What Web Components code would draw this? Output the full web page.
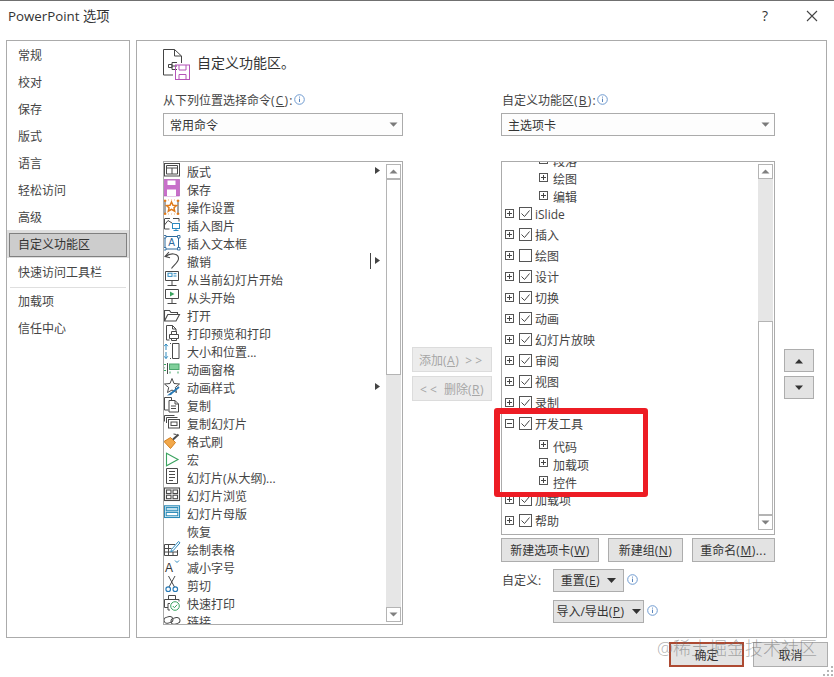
<!DOCTYPE html>
<html lang="zh-CN"><head><meta charset="utf-8"><title>PowerPoint 选项</title>
<style>
html,body{margin:0;padding:0;background:#fff}
body{width:834px;height:677px;overflow:hidden;font:12px/18px "Open Sans","Noto Sans CJK SC",sans-serif;color:#444}
u{text-underline-offset:1px}
.lat{letter-spacing:.5px}
.lat2{letter-spacing:1.2px}
.gt{letter-spacing:3px;margin:0 0 0 3px}
.lt{letter-spacing:3px;margin:0 1px 0 0}
</style></head><body>
<ppt-dialog>
  <ppt-titlebar slot="title">PowerPoint 选项</ppt-titlebar>
  <ppt-sidebar slot="side">
    <nav-item>常规</nav-item><nav-item>校对</nav-item><nav-item>保存</nav-item><nav-item>版式</nav-item>
    <nav-item>语言</nav-item><nav-item>轻松访问</nav-item><nav-item>高级</nav-item>
    <nav-item selected>自定义功能区</nav-item><nav-item>快速访问工具栏</nav-item>
    <nav-rule></nav-rule>
    <nav-item>加载项</nav-item><nav-item>信任中心</nav-item>
  </ppt-sidebar>
  <ppt-panel slot="main">
    <panel-head slot="head">自定义功能区。</panel-head>
    <field-col slot="c1">
      <field-label>从下列位置选择命令<span class="lat2">(<u>C</u>):</span></field-label>
      <ppt-combo>常用命令</ppt-combo>
      <cmd-list>
        <cmd-item icon="layout" arrow>版式</cmd-item>
        <cmd-item icon="save">保存</cmd-item>
        <cmd-item icon="action">操作设置</cmd-item>
        <cmd-item icon="picture">插入图片</cmd-item>
        <cmd-item icon="textbox">插入文本框</cmd-item>
        <cmd-item icon="undo" split>撤销</cmd-item>
        <cmd-item icon="current">从当前幻灯片开始</cmd-item>
        <cmd-item icon="start">从头开始</cmd-item>
        <cmd-item icon="open">打开</cmd-item>
        <cmd-item icon="print">打印预览和打印</cmd-item>
        <cmd-item icon="size">大小和位置...</cmd-item>
        <cmd-item icon="pane">动画窗格</cmd-item>
        <cmd-item icon="anim" arrow>动画样式</cmd-item>
        <cmd-item icon="copy">复制</cmd-item>
        <cmd-item icon="dup">复制幻灯片</cmd-item>
        <cmd-item icon="brush">格式刷</cmd-item>
        <cmd-item icon="macro">宏</cmd-item>
        <cmd-item icon="outline">幻灯片(从大纲)...</cmd-item>
        <cmd-item icon="sorter">幻灯片浏览</cmd-item>
        <cmd-item icon="master">幻灯片母版</cmd-item>
        <cmd-item>恢复</cmd-item>
        <cmd-item icon="table">绘制表格</cmd-item>
        <cmd-item icon="shrink">减小字号</cmd-item>
        <cmd-item icon="cut">剪切</cmd-item>
        <cmd-item icon="quick">快速打印</cmd-item>
        <cmd-item icon="link">链接</cmd-item>
      </cmd-list>
    </field-col>
    <move-col slot="c2">
      <ppt-btn disabled lift style="width:80px;height:25px">添加<span class="lat">(<u>A</u>)</span> <span class="gt">&gt;&gt;</span></ppt-btn>
      <ppt-btn disabled lift style="width:80px;height:25px"><span class="lt">&lt;&lt;</span> 删除<span class="lat">(<u>R</u>)</span></ppt-btn>
    </move-col>
    <field-col slot="c3" wide>
      <field-label style="padding-left:1px">自定义功能区<span class="lat2">(<u>B</u>):</span></field-label>
      <ppt-combo>主选项卡</ppt-combo>
      <tree-list>
        <tree-row sub high>段落</tree-row>
        <tree-row sub high>绘图</tree-row>
        <tree-row sub high>编辑</tree-row>
        <tree-row checked>iSlide</tree-row>
        <tree-row checked>插入</tree-row>
        <tree-row>绘图</tree-row>
        <tree-row checked>设计</tree-row>
        <tree-row checked>切换</tree-row>
        <tree-row checked>动画</tree-row>
        <tree-row checked>幻灯片放映</tree-row>
        <tree-row checked>审阅</tree-row>
        <tree-row checked>视图</tree-row>
        <tree-row checked>录制</tree-row>
        <tree-row checked open>开发工具</tree-row>
        <tree-row sub>代码</tree-row>
        <tree-row sub>加载项</tree-row>
        <tree-row sub>控件</tree-row>
        <tree-row checked style="height:20px">加载项</tree-row>
        <tree-row checked>帮助</tree-row>
      </tree-list>
      <action-row style="margin-top:3px">
        <ppt-btn lift style="width:98px;height:24px">新建选项卡<span class="lat">(<u>W</u>)</span></ppt-btn>
        <ppt-btn lift style="width:75px;height:24px">新建组<span class="lat">(<u>N</u>)</span></ppt-btn>
        <ppt-btn lift style="width:83px;height:24px">重命名<span class="lat">(<u>M</u>)...</span></ppt-btn>
      </action-row>
      <custom-row style="margin-top:7px" label="自定义:">
        <ppt-btn menu style="width:71px;height:23px">重置<span class="lat">(<u>E</u>)</span></ppt-btn>
      </custom-row>
      <custom-row style="margin-top:8px">
        <ppt-btn menu style="width:91px;height:23px">导入/导出<span class="lat">(<u>P</u>)</span></ppt-btn>
      </custom-row>
    </field-col>
    <order-col slot="c4">
      <ppt-btn style="width:30px;height:23px"><svg width="10" height="6" viewBox="0 0 10 6" style="display:block"><path d="M1 5.5L5 1l4 4.5z" fill="#333"/></svg></ppt-btn>
      <ppt-btn style="width:30px;height:23px"><svg width="10" height="6" viewBox="0 0 10 6" style="display:block"><path d="M1 .5L5 5l4-4.5z" fill="#333"/></svg></ppt-btn>
    </order-col>
  </ppt-panel>
  <ppt-footer slot="foot">
    <ppt-btn default lift style="width:75px;height:25px">确定</ppt-btn>
    <ppt-btn lift style="width:75px;height:25px">取消</ppt-btn>
  </ppt-footer>
</ppt-dialog>

<script>
const D='#4a4a4a',B='#2e8bc0',G='#3aa35f',O='#e07b1a';
const star=(c,s,extra='')=>`<polygon points="${c}" fill="${s}" ${extra}/>`;
const ICONS={
layout:`<g fill="none" stroke="${D}"><rect x="1.5" y=".5" width="15" height="12.5"/><path d="M3.5 2.5h11v8.5h-11zM3.5 5h11M9 5v6"/></g>`,
save:`<rect x=".5" y="-1.5" width="16" height="16.5" fill="#c86fca" stroke="#a94fb0" stroke-width=".6"/><rect x="4.5" y="-.5" width="8" height="4.5" fill="#fff"/><rect x="4" y="8.5" width="9" height="6.5" fill="#fff"/>`,
action:`<path d="M2 2v12M15 2v12" stroke="${D}" fill="none"/><path d="M1 1h2v1.5H1zM14 1h2v1.5h-2zM1 14h2v1.5H1zM14 14h2v1.5h-2zM5 1h1M8 1h1M11 1h1M5 15h1M8 15h1M11 15h1" fill="${O}" stroke="${O}" stroke-width=".6"/>`+star('8.5,3 10,6.2 13.5,6.5 11,8.8 11.7,12.2 8.5,10.4 5.3,12.2 6,8.8 3.5,6.5 7,6.2','none',`stroke="${O}" stroke-width="1.5"`),
picture:`<g fill="none" stroke="${D}"><path d="M2 1.5h5M10 1.5h6v3M1.5 1.5v10.5h5M1.5 8L5 3.5 9 6"/></g><g fill="none" stroke="${B}"><rect x="9.5" y="6.5" width="7" height="5"/><path d="M13 11.5v2M10.5 13.5h5"/></g>`,
textbox:`<rect x="2" y="1.5" width="13.5" height="12.5" fill="none" stroke="#2c6a9d"/><path d="M.5 .5h2.5v2.5H.5zM14.5 .5h2.5v2.5h-2.5zM.5 12.5h2.5v2.5H.5zM14.5 12.5h2.5v2.5h-2.5z" fill="#fff" stroke="#2c6a9d" stroke-width=".9"/><text x="8.7" y="11" text-anchor="middle" font-size="10" font-family="Liberation Sans" fill="#2c6a9d">A</text>`,
undo:`<path d="M6 -1L2 3.5l5 1.3M2.6 3.6C7 -.5 15.5 0 15.5 5.5c0 3.5-4 6-7 10" fill="none" stroke="${D}" stroke-width="1.1"/>`,
current:`<g fill="none" stroke="${D}"><path d="M2.5 .5h13v9h-13zM9 9.5v5M4.5 14.5h9"/></g><rect x="5" y="2.2" width="4" height="3.2" fill="none" stroke="${B}"/><path d="M10.5 2.7h3M10.5 5h3" stroke="${B}"/>`,
start:`<g fill="none" stroke="${D}"><path d="M2.5 .5h13v9h-13zM9 9.5v5M4.5 14.5h9"/></g><path d="M7 2.5l4.5 2.5L7 7.5z" fill="${G}"/>`,
open:`<path d="M1.5 14V3.5h5l1.5 2h6.5V8M1.5 14h11.5l3.5-6.5H4.8z" fill="none" stroke="${D}" stroke-width="1.1"/>`,
print:`<g fill="none" stroke="${D}"><path d="M3.5 15V.5h6l3.5 3.5v3M9.5 .5v3.5h3.5M3.5 15h3"/><path d="M8.5 6.5h5v3h-5zM6.5 9.5h9v4h-9zM8.5 13.5v2h5v-2"/></g>`,
size:`<path d="M3 1v6M1.2 3.2L3 1l1.8 2.2M3 9v6.5M1.2 13.3L3 15.5l1.8-2.2" fill="none" stroke="${B}"/><path d="M9.5 .5h6.5v15H9.5zM7 .5h1M7 15.5h1" fill="none" stroke="${D}"/>`,
pane:`<rect x="6.5" y="3" width="9.5" height="5.5" fill="#7fcf9a" stroke="#4aa56c"/><path d="M4.5 2v11" stroke="${D}"/><path d="M1 3.5h2M1 9.5h2M1 6v1.5M7 10.5v2M15 10.5v2" stroke="${G}"/>`,
anim:`<polygon points="9,-.5 11,4.5 16.5,5 12.3,8.5 13.5,13.5 9,11 4.5,13.5 5.7,8.5 1.5,5 7,4.5" fill="none" stroke="${D}"/><path d="M16 8L7.5 15" stroke="#2578b5" stroke-width="1.8"/><path d="M8.5 13L4 16.5l4.2-.5z" fill="#2578b5"/>`,
copy:`<g fill="none" stroke="${D}"><path d="M8.5 3V.5h-7v12.5h4"/><path d="M6 3.5h6l3.5 3.5v8H6zM12 3.5V7h3.5M8 9h5M8 11.5h5"/></g>`,
dup:`<g fill="none" stroke="${D}"><path d="M1.5 6.5v-6h10M3.5 8v-5.5h11"/><rect x="5.5" y="4.5" width="11" height="8.5"/><rect x="8" y="7" width="6" height="3.5"/></g>`,
brush:`<path d="M1 8.5l6.5-4 5 5-5 6z" fill="#f2a84a" stroke="#d4801f"/><path d="M10 6.5l5.5-5" stroke="${D}" stroke-width="2"/><path d="M10.5 1l3 .5" stroke="${D}"/>`,
macro:`<path d="M3.5 2.2l11.5 6.3-11.5 6.3z" fill="none" stroke="${G}" stroke-width="1.1"/>`,
outline:`<g fill="none" stroke="${D}"><path d="M3.5 -.5h11v15h-11zM6 2.5h6M6 5.5h6M6 8.5h6M6 11.5h4"/></g>`,
sorter:`<g fill="none" stroke="${D}" stroke-width="1.1"><rect x="1.5" y="1" width="15" height="12.5"/><rect x="3.5" y="3" width="4.5" height="3.5"/><rect x="10" y="3" width="4.5" height="3.5"/><rect x="3.5" y="8.2" width="4.5" height="3.5"/><rect x="10" y="8.2" width="4.5" height="3.5"/></g>`,
master:`<g fill="#fff" stroke="#2b8bb8" stroke-width="1.1"><rect x="1.5" y=".8" width="15" height="11.7"/><rect x="3.2" y="2.4" width="11.6" height="3.4" fill="#bfe0ee"/><rect x="3.2" y="7.4" width="11.6" height="3.4"/></g>`,
table:`<g fill="none" stroke="${D}"><path d="M1.5 3.5H12M1.5 3.5V14.5H14.5V9M1.5 7.5h7M1.5 11h13M5.5 3.5v11M10 11v3.5"/></g><path d="M15.5 .5L8.5 8.5l-.7 2.2 2.2-.9 7-8z" fill="#fff" stroke="${B}"/>`,
shrink:`<text x="2" y="12.5" font-size="12" font-family="Liberation Sans" fill="#333">A</text><path d="M12 1.5l2 2 2-2" fill="none" stroke="${B}"/>`,
cut:`<path d="M5.5 -1L11.5 10M12 -1L6 10" fill="none" stroke="${D}"/><circle cx="5.2" cy="12.2" r="2.3" fill="none" stroke="#2578b5" stroke-width="1.1"/><circle cx="12.3" cy="12.2" r="2.3" fill="none" stroke="#2578b5" stroke-width="1.1"/>`,
quick:`<g fill="none" stroke="${D}"><path d="M5.5 4V.5h7V4M1.5 4.5h14.5v2M1.5 4.5v8h3.5M5 8.5h2M5 8.5v6.5h2"/></g><circle cx="12" cy="11" r="4.3" fill="#fff" stroke="${G}"/><path d="M9.8 11l1.6 1.7 2.8-3" fill="none" stroke="${G}"/>`,
link:`<g fill="none" stroke="${D}"><rect x="1" y="4" width="9" height="6" rx="3" transform="rotate(-15 5 7)"/><rect x="8" y="5" width="9" height="6" rx="3" transform="rotate(-15 12 8)"/></g>`
};
function def(name,css,html){
  customElements.define(name,class extends HTMLElement{
    connectedCallback(){
      if(this.shadowRoot)return;
      const r=this.attachShadow({mode:'open'});
      r.innerHTML=`<style>${css}</style>${typeof html==='function'?html(this):html}`;
    }
  });
}
const scrollbar=(a,b,c)=>`<div class="sb">
  <div class="sbtn"><svg width="9" height="5" viewBox="0 0 9 5"><path d="M.5 4.5L4.5 .5l4 4z" fill="#808080"/></svg></div>
  <div style="flex:0 0 ${a}px;background:#e6e6e6"></div>
  <div class="thumb" style="height:${b}px"></div>
  <div style="flex:0 0 ${c}px;background:#e6e6e6"></div>
  <div class="sbtn"><svg width="9" height="5" viewBox="0 0 9 5"><path d="M.5 .5L4.5 4.5l4-4z" fill="#808080"/></svg></div></div>`;
const sbCss=`.sb{flex:0 0 15px;width:15px;display:flex;flex-direction:column;margin:2px 1px 2px 0;}
.sbtn{height:15px;box-sizing:border-box;border:1px solid #b4b4b4;display:flex;align-items:center;justify-content:center;background:#fff;flex:none}
.thumb{box-sizing:border-box;border:1px solid #b4b4b4;background:#fff;flex:none}`;
const info=(mt=0)=>`<svg width="11" height="11" viewBox="0 0 11 11" style="display:block;flex:none;margin-top:${mt}px"><circle cx="5.5" cy="5.5" r="4.8" fill="#fff" stroke="#6f9bd0"/><path d="M5.5 4.6v3.4M5.5 2.6v1" stroke="#5b86bd"/></svg>`;

def('ppt-dialog',`:host{display:flex;flex-direction:column;width:834px;height:677px;position:relative;box-sizing:border-box;border-top:1px solid #707070;background:#fff;overflow:hidden}
.body{display:flex;gap:6px;height:598px;padding:0 7px 0 6px;flex:none}
.wm{position:absolute;left:657px;top:634px;font-size:18px;line-height:26px;color:rgba(110,110,110,.55);font-weight:300;white-space:nowrap}
.box{position:absolute;left:494px;top:407px;width:154px;height:89px;box-sizing:border-box;border:solid #ed1c24;border-width:6px 5px 5px 6px;border-radius:3px}
.grip{position:absolute;right:0;bottom:0}`,
`<slot name="title"></slot><div class="body"><slot name="side"></slot><slot name="main"></slot></div><slot name="foot"></slot>
<div class="box"></div><div class="wm">@稀土掘金技术社区</div>
<svg class="grip" width="12" height="12" viewBox="0 0 12 12" fill="#b5b5b5"><path d="M9 1h2v2H9zM5 5h2v2H5zM9 5h2v2H9zM1 9h2v2H1zM5 9h2v2H5zM9 9h2v2H9z"/></svg>`);

def('ppt-titlebar',`:host{display:flex;align-items:center;height:39px;flex:none;padding:0 0 10px 8px;box-sizing:border-box;font-size:13.3px;color:#333}
.t{flex:1;white-space:nowrap}.q{width:14px;margin-right:34px;text-align:center;font-size:14px}
svg{display:block;margin-right:16px}`,
`<div class="t"><slot></slot></div><div class="q">?</div><svg width="12" height="12" viewBox="0 0 12 12"><path d="M1 1l10 10M11 1L1 11" stroke="#444" stroke-width="1.1" fill="none"/></svg>`);

def('ppt-sidebar',`:host{display:flex;flex-direction:column;box-sizing:border-box;width:124px;flex:none;border:1px solid #ababab;padding-top:1px}`,`<slot></slot>`);

def('nav-item',`:host{display:flex;align-items:center;height:27px;padding-left:11px;white-space:nowrap;flex:none}
:host([selected]){height:28px;margin:-1px 0 1px;padding:3px 2px 1px 2px;box-sizing:border-box;background:#dedede}
.in{display:flex;align-items:center;flex:1;height:100%;}
:host([selected]) .in{box-sizing:border-box;border:1px solid #808080;background:#cdcdcd;padding-left:8px;color:#333}`,
`<div class="in"><slot></slot></div>`);

def('nav-rule',`:host{display:block;height:1px;margin:1px 3px 0 3px;background:#dfdfdf;flex:none}`,``);

def('ppt-panel',`:host{display:flex;flex-direction:column;box-sizing:border-box;flex:1;border:1px solid #ababab;padding:0 0 0 26px}
.cols{display:flex;gap:9px}`,
`<slot name="head"></slot><div class="cols"><slot name="c1"></slot><slot name="c2"></slot><slot name="c3"></slot><slot name="c4"></slot></div>`);

def('panel-head',`:host{display:flex;align-items:flex-start;gap:7px;height:50px;font-size:14px;padding-top:8px;box-sizing:border-box;color:#333;flex:none}
svg{display:block;flex:none}span{display:block;margin-top:5px}`,
`<svg width="27" height="31" viewBox="0 0 27 31"><g fill="none" stroke="#444"><path d="M10 26H.5V.5h11L18.5 7v7M11.5 .5V7h7"/><path d="M9 13.5h5M9 13.5v7h5M5.5 15.5h3.5v3H5.5zM9 17h5"/></g><g fill="none" stroke="#b455b8"><rect x="12.5" y="16" width="14" height="14.5"/><path d="M16 16v5h7v-5M16 30.5v-5h7v5"/></g></svg><span><slot></slot></span>`);

def('field-col',`:host{display:flex;flex-direction:column;width:240px;flex:none}:host([wide]){width:274px}`,`<slot></slot>`);

def('field-label',`:host{display:flex;height:19px;align-items:center;white-space:nowrap;flex:none}
span{display:block}`,`<span><slot></slot></span>${info(-2)}`);

def('ppt-combo',`:host{display:flex;align-items:center;box-sizing:border-box;height:23px;margin:3px 0 25px;border:1px solid #ababab;padding:0 4px 0 6px;flex:none;color:#333;background:#fdfdfd}
span{flex:1;padding-top:2px}svg{display:block}`,
`<span><slot></slot></span><svg width="9" height="5" viewBox="0 0 9 5"><path d="M.5 .5h8L4.5 4.8z" fill="#7a7a7a"/></svg>`);

def('cmd-list',`:host{display:flex;box-sizing:border-box;height:464px;border:1px solid #ababab;overflow:hidden;flex:none}
.c{flex:1;min-width:0;padding-top:1px;overflow:hidden}
${sbCss}.sb{margin-right:1px}`,
`<div class="c"><slot></slot></div>${scrollbar(0,196,232)}`);

def('cmd-item',`:host{display:flex;align-items:center;height:18px;margin-left:-1px;white-space:nowrap;position:relative}
svg.i{display:block;flex:none;overflow:visible}
span{margin-left:6px;padding-top:2px}
.a{position:absolute;left:212px;top:4px;display:block}
.s{position:absolute;left:207px;top:0;width:1px;height:16px;background:#444}`,
el=>{
 const ic=el.getAttribute('icon');
 return `<svg class="i" width="18" height="18" viewBox="0 0 18 18">${ic?ICONS[ic]:''}</svg><span><slot></slot></span>`+
 ((el.hasAttribute('arrow')||el.hasAttribute('split'))?`<svg class="a" width="5" height="7" viewBox="0 0 5 7"><path d="M0 0l5 3.5L0 7z" fill="#444"/></svg>`:'')+
 (el.hasAttribute('split')?`<div class="s"></div>`:'');
});

def('tree-list',`:host{display:flex;box-sizing:border-box;height:374px;border:1px solid #ababab;overflow:hidden;flex:none}
.c{flex:1;min-width:0;overflow:hidden}.in{margin-top:-13px}
${sbCss}`,
`<div class="c"><div class="in"><slot></slot></div></div>${scrollbar(142,194,0)}`);

def('tree-row',`:host{display:flex;align-items:center;height:21px;padding-left:3px;white-space:nowrap;box-sizing:border-box}
:host([open]){height:23px;padding-bottom:2px}
:host([sub]){height:18px;padding-left:37px;padding-top:2px}
:host([high]){padding-top:3px}
svg{display:block;flex:none}
.x{margin-right:5px;margin-top:-1px}
:host([sub]) .x{margin-top:-3px}
:host([high]) .x{margin-top:0}
.k{margin-right:3px}
span{padding-top:2px}
:host([sub]) span{padding-top:4px}
:host([high]) span{padding-top:5px}`,
el=>{
 const open=el.hasAttribute('open'),sub=el.hasAttribute('sub'),ck=el.hasAttribute('checked');
 return `<svg class="x" width="9" height="9" viewBox="0 0 9 9"><rect x=".5" y=".5" width="8" height="8" fill="#fff" stroke="#555"/><path d="M2 4.5h5${open?'':'M4.5 2v5'}" stroke="#444"/></svg>`+
 (sub?'':`<svg class="k" width="13" height="13" viewBox="0 0 13 13" style="margin-top:-1px"><rect x=".5" y=".5" width="12" height="12" fill="#fff" stroke="#555"/>${ck?'<path d="M2.5 6.5l3 3 5-6" fill="none" stroke="#444" stroke-width="1"/>':''}</svg>`)+`<span><slot></slot></span>`;
});

def('move-col',`:host{display:flex;flex-direction:column;gap:4px;padding-top:256px;width:80px;flex:none}`,`<slot></slot>`);
def('order-col',`:host{display:flex;flex-direction:column;gap:4px;padding-top:258px;width:30px;flex:none}`,`<slot></slot>`);
def('action-row',`:host{display:flex;gap:9px;flex:none}`,`<slot></slot>`);
def('custom-row',`:host{display:flex;align-items:center;flex:none}
.l{width:52px;flex:none;padding-left:1px;box-sizing:border-box;white-space:nowrap}
svg{margin:-3px 0 0 3px}`,
el=>`<div class="l">${el.getAttribute('label')||''}</div><slot></slot>${info(-3)}`);

def('ppt-btn',`:host{display:inline-flex;align-items:center;justify-content:center;box-sizing:border-box;border:1px solid #adadad;background:#e3e3e3;color:#333;white-space:nowrap;flex:none;gap:7px}
:host([disabled]){background:#ececec;border-color:#dcdcdc;color:#a6a6a6}
:host([default]){border:2px solid #ad4a32}
:host([lift]) .t{padding-top:2px}
.t{display:block}
svg{display:block}`,
el=>`<span class="t"><slot></slot></span>${el.hasAttribute('menu')?'<svg width="9" height="5" viewBox="0 0 9 5"><path d="M0 0h9L4.5 5z" fill="#333"/></svg>':''}`);

def('ppt-footer',`:host{display:flex;justify-content:flex-end;gap:9px;padding:4px 6px 0 0;flex:none}`,`<slot></slot>`);
</script>
</body></html>
